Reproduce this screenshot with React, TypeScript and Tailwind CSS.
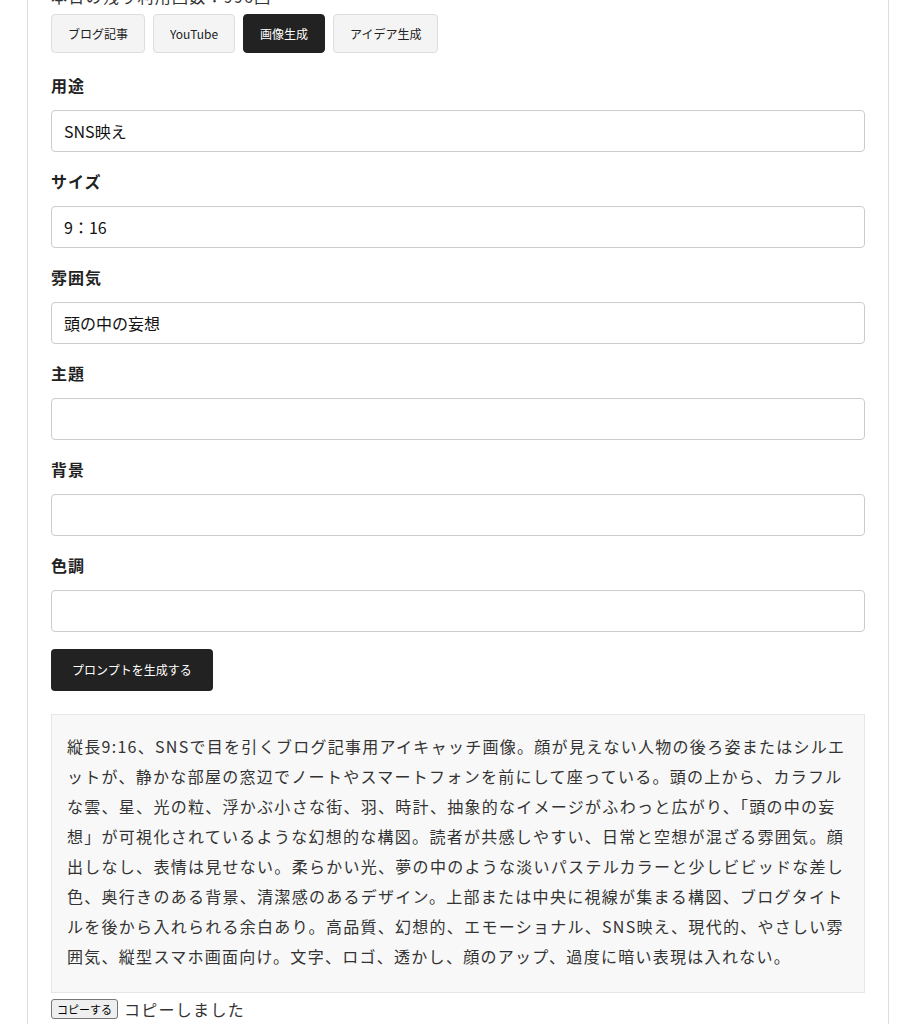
import { useState } from "react";

const TABS = ["ブログ記事", "YouTube", "画像生成", "アイデア生成"];

const FIELDS = [
  { label: "用途", value: "SNS映え" },
  { label: "サイズ", value: "9：16" },
  { label: "雰囲気", value: "頭の中の妄想" },
  { label: "主題", value: "" },
  { label: "背景", value: "" },
  { label: "色調", value: "" },
];

const RESULT =
  "縦長9:16、SNSで目を引くブログ記事用アイキャッチ画像。顔が見えない人物の後ろ姿またはシルエットが、静かな部屋の窓辺でノートやスマートフォンを前にして座っている。頭の上から、カラフルな雲、星、光の粒、浮かぶ小さな街、羽、時計、抽象的なイメージがふわっと広がり、「頭の中の妄想」が可視化されているような幻想的な構図。読者が共感しやすい、日常と空想が混ざる雰囲気。顔出しなし、表情は見せない。柔らかい光、夢の中のような淡いパステルカラーと少しビビッドな差し色、奥行きのある背景、清潔感のあるデザイン。上部または中央に視線が集まる構図、ブログタイトルを後から入れられる余白あり。高品質、幻想的、エモーショナル、SNS映え、現代的、やさしい雰囲気、縦型スマホ画面向け。文字、ロゴ、透かし、顔のアップ、過度に暗い表現は入れない。";

export default function App() {
  const [active, setActive] = useState("画像生成");
  const [values, setValues] = useState(FIELDS.map((f) => f.value));

  return (
    <div className="min-h-screen bg-white text-[#333] font-['Noto_Sans_CJK_JP','Noto_Sans',sans-serif]">
      <div className="ml-[27px] w-[862px] -mt-[41px] border border-[#ddd] bg-white px-[23px] pt-6 pb-8">
        <p className="text-[16px] leading-6 tracking-[0.08em]">本日の残り利用回数：996回</p>

        <div className="mt-[6px] mb-[20px] flex gap-2">
          {TABS.map((tab) => (
            <button
              key={tab}
              onClick={() => setActive(tab)}
              className={
                active === tab
                  ? "h-[39px] rounded-[4px] border border-[#222] bg-[#222] px-4 text-[12px] text-white"
                  : "h-[39px] rounded-[4px] border border-[#ddd] bg-[#f4f4f4] px-4 text-[12px] text-[#222]"
              }
            >
              {tab}
            </button>
          ))}
        </div>

        {FIELDS.map((field, i) => (
          <div key={field.label} className="mb-[17px]">
            <label className="mb-[13px] block text-[16px] font-bold leading-6 tracking-[0.06em] text-[#222]">
              {field.label}
            </label>
            <input
              value={values[i]}
              onChange={(e) => {
                const next = [...values];
                next[i] = e.target.value;
                setValues(next);
              }}
              className="block h-[42px] w-full rounded-[4px] border border-[#ccc] bg-white px-3 text-[16px] text-[#111] outline-none"
            />
          </div>
        ))}

        <button className="h-[42px] rounded-[4px] bg-[#222] px-[21px] text-[12px] text-white">
          プロンプトを生成する
        </button>

        <div className="mt-[23px] whitespace-pre-wrap break-all border border-[#e6e6e6] bg-[#f8f8f8] px-[15px] pt-4 pb-[21px] text-[16px] leading-[30px] tracking-[0.08em] text-[#333]">
          {RESULT}
        </div>

        <div className="mt-[4px] flex items-center gap-[6px]">
          <button className="h-[20px] rounded-[3px] border border-[#767676] bg-[#efefef] px-[5px] text-[11px] leading-none text-black">
            コピーする
          </button>
          <span className="text-[16px] leading-6 tracking-[0.08em] text-[#333]">コピーしました</span>
        </div>
      </div>
    </div>
  );
}
